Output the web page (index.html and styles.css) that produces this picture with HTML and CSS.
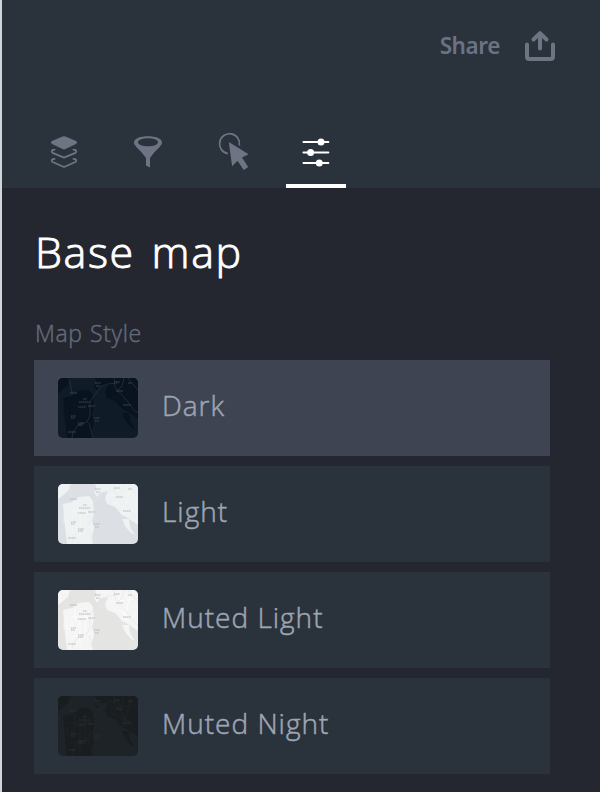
FILE: index.html
```html
<!DOCTYPE html>
<html lang="en">
<head>
<meta charset="utf-8">
<title>Base map</title>
<link rel="stylesheet" href="styles.css">
</head>
<body>
<svg class="defs" aria-hidden="true">
  <symbol id="map" viewBox="0 0 80 60">
    <rect class="water" width="80" height="60"/>
    <path class="land" d="M0 0H13L10 7 3 13 0 15ZM5 20L14 18 20 13 31 12 35 17 36 29 34 37 36 44 34 53 35 60H9L7 43ZM40 0H37L39 5 36 8 39 13 42 9 50 7 47 14 49 20 57 23 64 31 70 34 80 41V0ZM64 35L71 35 72 43 77 51 73 49 67 42Z"/>
    <path class="grid" d="M6 31V40M9 31V40M14 30V39M17 19V31M22 30V55M27 18V48M12 27H34M12 47L35 43M52 12L76 9M54 17L75 28M60 5L69 31M73 3L65 30"/>
    <path class="road" d="M14 60L15 54 20 47 29 44 32 37 32 24 42 9 50 6 60 5M11 0L14 15M35 60L31 45M56 0L57 9 63 16 70 24 77 33 80 35M66 0L64 8 59 13M70 0L80 12"/>
    <path class="place" d="M25 21H29M21 24H32M12 15H19M37 5H43M38 8H42M56 4H62M70 5H74M58 13H65M65 27H73M20 29H28M30 28H37M13 38H18M13 40H17M20 45H26M20 47H25M36 40H42M37 43H41M10 54H18"/>
  </symbol>
</svg>
<div class="panel">
  <header class="header">
    <div class="share">
      <span class="share-label">Share</span>
      <svg class="share-icon" viewBox="0 0 32 32"><path d="M3 14.5V26.5Q3 29 5.5 29H26.5Q29 29 29 26.5V14.5M16 18.5V4M9.5 9.5L16 3.2 22.5 9.5"/></svg>
    </div>
    <nav class="tabs">
      <div class="tab"><svg viewBox="0 0 32 40"><path class="solid" d="M14.5 4.6Q16 3.8 17.5 4.6L28 9Q30 10.5 28 12L17.5 17Q16 17.8 14.5 17L4 12Q2 10.5 4 9Z"/><path class="line layer" d="M6.6 17.6L4.4 18.2Q3 19.6 4.6 20.8L16 25.6 27.4 20.8Q29 19.6 27.6 18.2L25.4 17.6M6.6 26.8L4.4 27.4Q3 28.8 4.6 30L16 35 27.4 30Q29 28.8 27.6 27.4L25.4 26.8"/></svg></div>
      <div class="tab"><svg viewBox="0 0 32 40"><path class="solid" fill-rule="evenodd" d="M2 10.5C2 2.3 30 2.3 30 10.5C30 14.5 24 17 18 26V35.5L14 33.5V26C8 17 2 14.5 2 10.5ZM6 10.3C6 15.7 26 15.7 26 10.3C26 5 6 5 6 10.3Z"/></svg></div>
      <div class="tab"><svg viewBox="0 0 32 40"><path class="line thin" d="M11.8 21.6A10 10 0 1 1 23.4 13.5"/><path class="solid" d="M12.8 10L32.6 22.3 26 25.4 32.2 34.9 27.7 38 21.5 28.7 16.1 34.2Z"/></svg></div>
      <div class="tab active"><svg viewBox="0 0 32 40"><path class="line" d="M3.4 10H28.4M3.4 20.5H28.4M3.4 31H28.4"/><circle class="solid" cx="21" cy="10" r="3.5"/><circle class="solid" cx="10.6" cy="20.5" r="3.5"/><circle class="solid" cx="19.3" cy="31" r="3.5"/></svg></div>
    </nav>
  </header>
  <main class="content">
    <h1>Base map</h1>
    <div class="label">Map Style</div>
    <div class="styles">
      <div class="option selected"><svg class="thumb dark"><use href="#map"/></svg><span>Dark</span></div>
      <div class="option"><svg class="thumb light"><use href="#map"/></svg><span>Light</span></div>
      <div class="option"><svg class="thumb muted-light"><use href="#map"/></svg><span>Muted Light</span></div>
      <div class="option"><svg class="thumb muted-night"><use href="#map"/></svg><span>Muted Night</span></div>
    </div>
  </main>
</div>
</body>
</html>
```
FILE: styles.css
```css
* { box-sizing: border-box; }
body { margin: 0; background: #242730; font-family: "Open Sans", "Noto Sans", sans-serif; }
.defs { display: block; width: 0; height: 0; }
.panel { height: 792px; border-left: 2px solid #d0d5d8; overflow: hidden; box-shadow: inset 0 -1px #2b2030; }
.header { height: 188px; background: #2a323c; display: flex; flex-direction: column; justify-content: space-between; }
.share { display: flex; justify-content: flex-end; align-items: center; gap: 24px; padding: 30px 44px 0 0; height: 62px; color: #6c7283; }
.share-label { font-family: "Noto Sans", "Open Sans", sans-serif; font-size: 22.5px; font-weight: 600; line-height: 32px; letter-spacing: -.4px; }
.share-icon { width: 32px; height: 32px; fill: none; stroke: #6f7485; stroke-width: 4; stroke-linecap: round; stroke-linejoin: round; }
.tabs { display: flex; gap: 24px; padding-left: 32px; }
.tab { width: 60px; height: 56px; display: flex; justify-content: center; color: #6f7485; border-bottom: 4px solid transparent; }
.tab.active { color: #fff; border-color: #fff; }
.tab svg { width: 32px; height: 40px; overflow: visible; }
.solid { fill: currentColor; }
.line { fill: none; stroke: currentColor; stroke-width: 1.9; stroke-linecap: round; stroke-linejoin: round; }
.layer { stroke-width: 1.8; }
.thin { stroke-width: 1.7; stroke-linecap: butt; }
.content { padding: 32px 50px 0 33px; }
h1 { margin: 0; height: 64px; color: #fff; font-size: 43px; font-weight: 300; line-height: 64px; letter-spacing: 1.6px; word-spacing: 4px; white-space: nowrap; -webkit-text-stroke: .9px currentColor; }
.label { margin-top: 34px; height: 42px; color: #656c7c; font-size: 23px; font-weight: 300; line-height: 30px; letter-spacing: .6px; word-spacing: 1px; -webkit-text-stroke: .4px currentColor; }
.styles { display: grid; gap: 10px; margin-left: -1px; }
.option { height: 96px; display: flex; align-items: center; gap: 24px; padding-left: 24px; background: #2a323b; color: #9ea5b3; font-size: 28px; font-weight: 300; letter-spacing: 1px; -webkit-text-stroke: .5px currentColor; }
.option.selected { background: #3e4452; }
.option span { position: relative; top: -3px; }
.thumb { width: 80px; height: 60px; border-radius: 5px; }
.water { fill: var(--water); }
.land { fill: var(--land); }
.road { fill: none; stroke: var(--road); stroke-width: .5; }
.grid { fill: none; stroke: var(--grid); stroke-width: .6; }
.place { fill: none; stroke: var(--place); stroke-width: 1; stroke-dasharray: 1.6 .4; }
.dark { --water: #0f1c28; --land: #09131f; --road: #344551; --grid: #0c1824; --place: #394855; }
.light { --water: #dce0e5; --land: #eff2f3; --road: #e4e8e9; --grid: #f5f6f6; --place: #b5babd; }
.muted-light { --water: #e4e4e2; --land: #f5f5f5; --road: #e0e0e0; --grid: #fff; --place: #b8b8b8; }
.muted-night { --water: #1d2326; --land: #191d20; --road: #272b2e; --grid: #24282b; --place: #2d3134; }
```
